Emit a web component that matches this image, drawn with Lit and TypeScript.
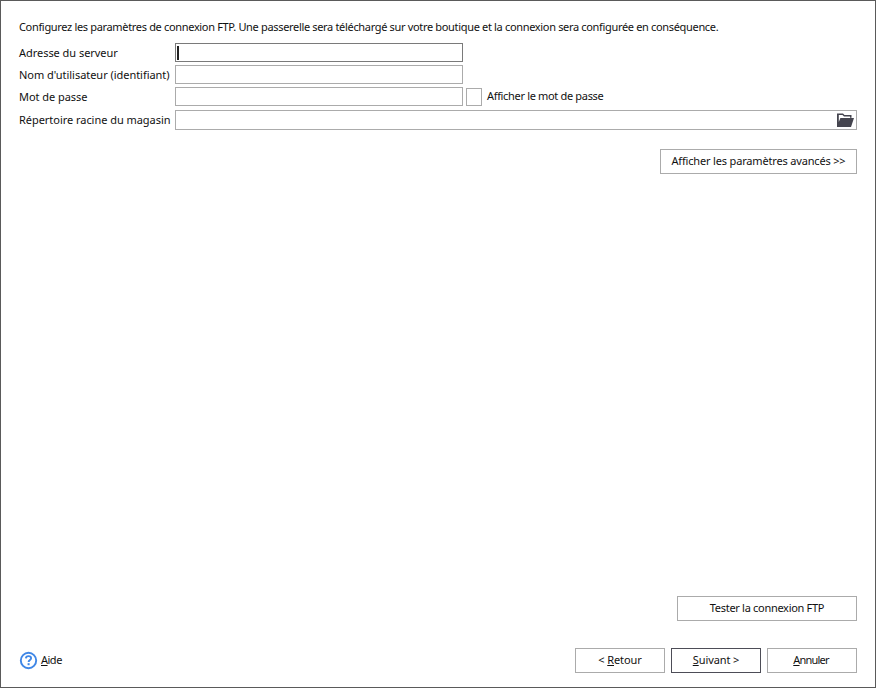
import { LitElement, html, css } from "lit";
import { customElement } from "lit/decorators.js";

@customElement("app-root")
export class AppRoot extends LitElement {
  static styles = css`
    :host { display: block; }
    .win {
      box-sizing: border-box; width: 876px; height: 688px; background: #fff;
      border: 1px solid #5a5a5a;
      padding: 18px 18px 14px 18px;
      display: flex; flex-direction: column;
      font-family: "Noto Sans", sans-serif; font-size: 11px; color: #111;
    }
    .intro { height: 15px; line-height: 15px; white-space: nowrap; letter-spacing: -0.33px; margin-bottom: 9px; }
    .form { display: flex; flex-direction: column; }
    .row { display: flex; align-items: center; height: 19px; margin-bottom: 3px; }
    .row.last { height: 20px; margin-top: 1px; margin-bottom: 0; }
    .lbl { width: 156px; flex: none; white-space: nowrap; letter-spacing: -0.04px; padding-bottom: 1px; box-sizing: border-box; }
    .input { box-sizing: border-box; width: 288px; height: 100%; border: 1px solid #ababab; background: #fff; flex: none; }
    .input.focus { border-color: #7a7a7a; position: relative; }
    .caret { position: absolute; left: 1px; top: 2px; width: 2px; height: 14px; background: #222; }
    .check { box-sizing: border-box; width: 16px; height: 18px; border: 1px solid #ababab; margin-left: 3px; flex: none; }
    .chk-lbl { margin-left: 5px; white-space: nowrap; letter-spacing: -0.33px; padding-bottom: 2px; }
    .browse { box-sizing: border-box; flex: 1; height: 100%; border: 1px solid #ababab; display: flex; align-items: center; justify-content: flex-end; padding-right: 2px; }
    .btn { box-sizing: border-box; height: 25px; border: 1px solid #ababab; background: #fff; display: flex; align-items: center; justify-content: center; white-space: nowrap; flex: none; padding-bottom: 2px; letter-spacing: -0.3px; }
    .btn.primary { border-color: #4d4d57; }
    .adv-row { display: flex; justify-content: flex-end; margin-top: 19px; }
    .adv { width: 197px; letter-spacing: -0.17px; }
    .spacer { flex: 1; }
    .test-row { display: flex; justify-content: flex-end; margin-bottom: 27px; }
    .test { width: 180px; }
    .foot { display: flex; align-items: center; gap: 6px; }
    .help { display: flex; align-items: center; gap: 3px; }
    .help span { padding-bottom: 2px; letter-spacing: -0.5px; }
    .actions { margin-left: auto; display: flex; gap: 6px; }
    .act { width: 90px; letter-spacing: -0.1px; }
    .act.tight { letter-spacing: -0.8px; padding-right: 2px; }
    u { text-underline-offset: 1px; }
    svg { display: block; flex: none; }
  `;

  render() {
    return html`<div class="win">
      <div class="intro">Configurez les paramètres de connexion FTP. Une passerelle sera téléchargé sur votre boutique et la connexion sera configurée en conséquence.</div>
      <div class="form">
        <div class="row"><span class="lbl">Adresse du serveur</span><div class="input focus"><span class="caret"></span></div></div>
        <div class="row"><span class="lbl">Nom d'utilisateur (identifiant)</span><div class="input"></div></div>
        <div class="row"><span class="lbl">Mot de passe</span><div class="input"></div><div class="check"></div><span class="chk-lbl">Afficher le mot de passe</span></div>
        <div class="row last"><span class="lbl">Répertoire racine du magasin</span><div class="browse">
          <svg width="17" height="14" viewBox="0 0 17 14"><path d="M0 0.5H6L7.5 2H14.5V4.8H13V3.4H7L5.5 2H1.8V9L3.4 5H17L14 14H0Z" fill="#45454f"/></svg>
        </div></div>
      </div>
      <div class="adv-row"><div class="btn adv">Afficher les paramètres avancés &gt;&gt;</div></div>
      <div class="spacer"></div>
      <div class="test-row"><div class="btn test">Tester la connexion FTP</div></div>
      <div class="foot">
        <div class="help">
          <svg width="19" height="19" viewBox="0 0 19 19"><circle cx="9.5" cy="9.5" r="7.7" fill="none" stroke="#3f87e6" stroke-width="1.9"/><path d="M6.9 7.4C7 5.9 8.1 5.1 9.5 5.1C11 5.1 12.1 6 12.1 7.3C12.1 8.9 9.6 9.1 9.6 11" fill="none" stroke="#3f87e6" stroke-width="1.9"/><rect x="8.6" y="12.2" width="2" height="2" fill="#3f87e6"/></svg>
          <span><u>A</u>ide</span>
        </div>
        <div class="actions">
          <div class="btn act"><span>&lt; <u>R</u>etour</span></div>
          <div class="btn act primary"><span><u>S</u>uivant &gt;</span></div>
          <div class="btn act tight"><span><u>A</u>nnuler</span></div>
        </div>
      </div>
    </div>`;
  }
}
